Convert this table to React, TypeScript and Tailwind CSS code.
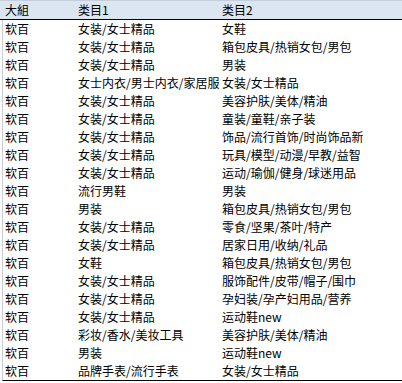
import React from 'react';

const rows: [string, string, string][] = [
  ['软百', '女装/女士精品', '女鞋'],
  ['软百', '女装/女士精品', '箱包皮具/热销女包/男包'],
  ['软百', '女装/女士精品', '男装'],
  ['软百', '女士内衣/男士内衣/家居服', '女装/女士精品'],
  ['软百', '女装/女士精品', '美容护肤/美体/精油'],
  ['软百', '女装/女士精品', '童装/童鞋/亲子装'],
  ['软百', '女装/女士精品', '饰品/流行首饰/时尚饰品新'],
  ['软百', '女装/女士精品', '玩具/模型/动漫/早教/益智'],
  ['软百', '女装/女士精品', '运动/瑜伽/健身/球迷用品'],
  ['软百', '流行男鞋', '男装'],
  ['软百', '男装', '箱包皮具/热销女包/男包'],
  ['软百', '女装/女士精品', '零食/坚果/茶叶/特产'],
  ['软百', '女装/女士精品', '居家日用/收纳/礼品'],
  ['软百', '女鞋', '箱包皮具/热销女包/男包'],
  ['软百', '女装/女士精品', '服饰配件/皮带/帽子/围巾'],
  ['软百', '女装/女士精品', '孕妇装/孕产妇用品/营养'],
  ['软百', '女装/女士精品', '运动鞋new'],
  ['软百', '彩妆/香水/美妆工具', '美容护肤/美体/精油'],
  ['软百', '男装', '运动鞋new'],
  ['软百', '品牌手表/流行手表', '女装/女士精品'],
];

const font = { fontFamily: '"Noto Sans CJK SC", "Liberation Sans", sans-serif' };

const App = () => {
  return (
    <div className="w-[402px] h-[383px] bg-white text-[12px] text-black overflow-hidden" style={font}>
      <div className="grid grid-cols-[73px_144px_1fr] h-[20px] items-center pl-[5px] bg-[#dce6f1] border-t border-[#c5cedb] border-b border-b-black leading-none">
        <div>大組</div>
        <div>类目1</div>
        <div>类目2</div>
      </div>
      <div className="ml-[2px] border-l border-[#c8cdd6] border-b border-b-black">
        {rows.map((r, i) => (
          <div key={i} className="grid grid-cols-[73px_144px_1fr] h-[18px] items-center pl-[2px] leading-none whitespace-nowrap">
            <div>{r[0]}</div>
            <div>{r[1]}</div>
            <div>{r[2]}</div>
          </div>
        ))}
      </div>
    </div>
  );
};

export default App;
